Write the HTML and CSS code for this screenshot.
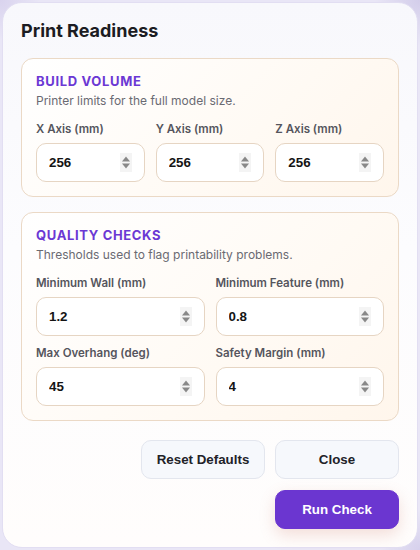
FILE: index.html
```html
<!DOCTYPE html>
<html lang="en">
<head>
<meta charset="utf-8">
<title>Print Readiness</title>
<link rel="stylesheet" href="styles.css">
</head>
<body>
<div class="dialog">
  <h1 class="title">Print Readiness</h1>

  <section class="panel">
    <h2 class="panel-title">BUILD VOLUME</h2>
    <p class="panel-sub">Printer limits for the full model size.</p>
    <div class="grid grid-3">
      <label class="field">
        <span class="field-label">X Axis (mm)</span>
        <span class="num"><input class="num-input" type="text" value="256"><svg class="spin" width="10" height="16" viewBox="0 0 10 16"><path d="M5 2 L9 7 L1 7 Z" fill="#888"/><path d="M1 9 L9 9 L5 14 Z" fill="#888"/></svg></span>
      </label>
      <label class="field">
        <span class="field-label">Y Axis (mm)</span>
        <span class="num"><input class="num-input" type="text" value="256"><svg class="spin" width="10" height="16" viewBox="0 0 10 16"><path d="M5 2 L9 7 L1 7 Z" fill="#888"/><path d="M1 9 L9 9 L5 14 Z" fill="#888"/></svg></span>
      </label>
      <label class="field">
        <span class="field-label">Z Axis (mm)</span>
        <span class="num"><input class="num-input" type="text" value="256"><svg class="spin" width="10" height="16" viewBox="0 0 10 16"><path d="M5 2 L9 7 L1 7 Z" fill="#888"/><path d="M1 9 L9 9 L5 14 Z" fill="#888"/></svg></span>
      </label>
    </div>
  </section>

  <section class="panel">
    <h2 class="panel-title">QUALITY CHECKS</h2>
    <p class="panel-sub">Thresholds used to flag printability problems.</p>
    <div class="grid grid-2">
      <label class="field">
        <span class="field-label">Minimum Wall (mm)</span>
        <span class="num"><input class="num-input" type="text" value="1.2"><svg class="spin" width="10" height="16" viewBox="0 0 10 16"><path d="M5 2 L9 7 L1 7 Z" fill="#888"/><path d="M1 9 L9 9 L5 14 Z" fill="#888"/></svg></span>
      </label>
      <label class="field">
        <span class="field-label">Minimum Feature (mm)</span>
        <span class="num"><input class="num-input" type="text" value="0.8"><svg class="spin" width="10" height="16" viewBox="0 0 10 16"><path d="M5 2 L9 7 L1 7 Z" fill="#888"/><path d="M1 9 L9 9 L5 14 Z" fill="#888"/></svg></span>
      </label>
      <label class="field">
        <span class="field-label">Max Overhang (deg)</span>
        <span class="num"><input class="num-input" type="text" value="45"><svg class="spin" width="10" height="16" viewBox="0 0 10 16"><path d="M5 2 L9 7 L1 7 Z" fill="#888"/><path d="M1 9 L9 9 L5 14 Z" fill="#888"/></svg></span>
      </label>
      <label class="field">
        <span class="field-label">Safety Margin (mm)</span>
        <span class="num"><input class="num-input" type="text" value="4"><svg class="spin" width="10" height="16" viewBox="0 0 10 16"><path d="M5 2 L9 7 L1 7 Z" fill="#888"/><path d="M1 9 L9 9 L5 14 Z" fill="#888"/></svg></span>
      </label>
    </div>
  </section>

  <div class="actions">
    <button class="btn btn-secondary" type="button">Reset Defaults</button>
    <button class="btn btn-secondary" type="button">Close</button>
    <button class="btn btn-primary" type="button">Run Check</button>
  </div>
</div>
</body>
</html>
```

FILE: styles.css
```css
* { box-sizing: border-box; }

html, body {
  margin: 0;
  padding: 0;
}

body {
  width: 420px;
  height: 550px;
  overflow: hidden;
  padding: 2px;
  background:
    radial-gradient(circle at 0 0, #d9d3ee 0, rgba(217,211,238,0) 40px),
    radial-gradient(circle at 100% 0, #d3cdea 0, rgba(211,205,234,0) 45px),
    radial-gradient(circle at 100% 100%, #d6d0ec 0, rgba(214,208,236,0) 40px),
    #e9e6f6;
  font-family: Inter, "Noto Sans", sans-serif;
}

.dialog {
  width: 416px;
  height: 546px;
  border: 1px solid #e2def2;
  border-radius: 20px;
  padding: 17px 18px 18px;
  background: linear-gradient(180deg, #f8f8fc 0%, #fcfcfe 45%, #fffdfc 100%);
  display: flex;
  flex-direction: column;
}

.title {
  margin: 0 0 16px;
  font-size: 18px;
  line-height: 22px;
  font-weight: 700;
  color: #1c1c22;
}

.panel {
  border: 1px solid #ebd9c6;
  border-radius: 12px;
  padding: 14px 14px 14px;
  background: linear-gradient(135deg, #ffffff 0%, #fffaf4 60%, #fff6ec 100%);
  margin-bottom: 15px;
}

.panel-title {
  margin: 0;
  font-size: 13px;
  line-height: 16px;
  font-weight: 700;
  letter-spacing: 0.05em;
  color: #6b38d4;
}

.panel-sub {
  margin: 4px 0 13px;
  font-size: 12px;
  line-height: 16px;
  color: #6a6a72;
}

.grid {
  display: grid;
  column-gap: 11px;
  row-gap: 10px;
}

.grid-3 { grid-template-columns: repeat(3, minmax(0, 1fr)); }
.grid-2 { grid-template-columns: repeat(2, minmax(0, 1fr)); }

.field {
  display: flex;
  flex-direction: column;
  gap: 6px;
  min-width: 0;
}

.field-label {
  font-size: 11.5px;
  line-height: 15px;
  font-weight: 600;
  color: #55555d;
  white-space: nowrap;
}

.num {
  display: flex;
  align-items: center;
  height: 39px;
  border: 1px solid #e6d5c3;
  border-radius: 10px;
  background: #ffffff;
  padding: 0 12px 0 12px;
}

.num-input {
  flex: 1 1 0;
  width: 0;
  min-width: 0;
  border: 0;
  outline: 0;
  padding: 0;
  background: transparent;
  font-family: "Liberation Sans", Arial, sans-serif;
  font-size: 13.33px;
  font-weight: 700;
  color: #141414;
}

.spin {
  flex: none;
  background: #f4f4f4;
  width: 12px;
  height: 19px;
  padding: 1px;
}

.actions {
  margin-top: 4px;
  display: flex;
  flex-wrap: wrap;
  justify-content: flex-end;
  gap: 11px 10px;
}

.btn {
  width: 124px;
  height: 39px;
  border-radius: 10px;
  font-family: "Liberation Sans", Arial, sans-serif;
  font-size: 13.33px;
  font-weight: 700;
  cursor: pointer;
}

.btn-secondary {
  background: #f6f8fc;
  border: 1px solid #e3e6ee;
  color: #222228;
}

.btn-primary {
  background: #6b36d0;
  border: 1px solid #6b36d0;
  color: #ffffff;
  box-shadow: 0 6px 16px rgba(200, 110, 90, 0.22);
}
```
